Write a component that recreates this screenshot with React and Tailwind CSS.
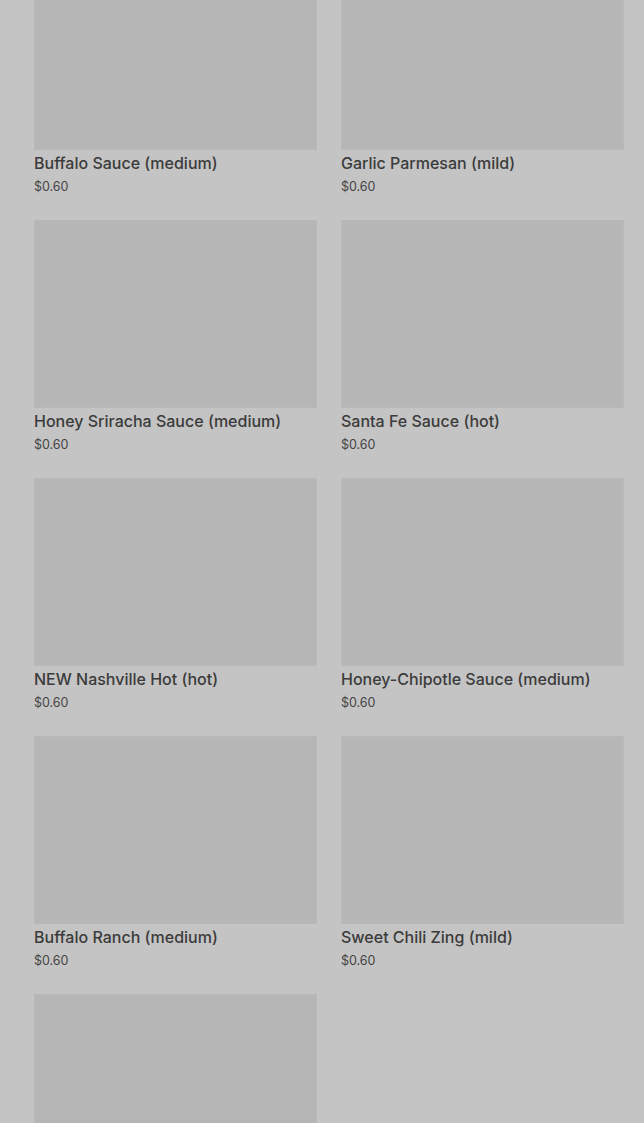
const sauces = [
  "Buffalo Sauce (medium)",
  "Garlic Parmesan (mild)",
  "Honey Sriracha Sauce (medium)",
  "Santa Fe Sauce (hot)",
  "NEW Nashville Hot (hot)",
  "Honey-Chipotle Sauce (medium)",
  "Buffalo Ranch (medium)",
  "Sweet Chili Zing (mild)",
  "",
];

function SauceCard({ name }) {
  return (
    <div className="flex flex-col">
      <div className="h-[188px] w-full bg-[#b6b6b6] border border-[#b9b9b9]" />
      {name && (
        <>
          <div className="mt-px text-[16px] leading-6 font-medium text-[#3b3b3b]">
            {name}
          </div>
          <div className="mt-[3px] text-[12.5px] leading-[18px] text-[#444444]">$0.60</div>
        </>
      )}
    </div>
  );
}

export default function App() {
  return (
    <div
      className="h-[1123px] overflow-hidden bg-[#c4c4c4]"
      style={{ fontFamily: "Inter, 'Noto Sans', sans-serif" }}
    >
      <div className="-mt-[38px] grid grid-cols-2 gap-x-6 gap-y-6 pl-[34px] pr-5">
        {sauces.map((s, i) => (
          <SauceCard key={i} name={s} />
        ))}
      </div>
    </div>
  );
}
